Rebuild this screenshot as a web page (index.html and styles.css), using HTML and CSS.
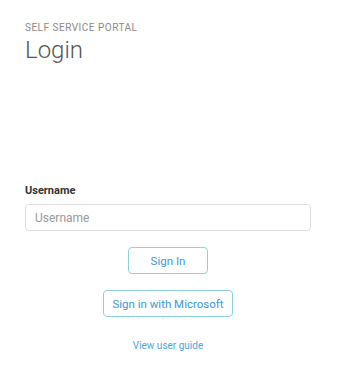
FILE: index.html
```html
<!DOCTYPE html>
<html lang="en">

<head>
  <meta charset="UTF-8" />
  <meta name="viewport" content="width=device-width, initial-scale=1.0" />
  <title>Login</title>
  <link rel="stylesheet" href="styles.css">
</head>

<body>
  <div class="page">
    <header class="header">
      <div class="eyebrow">SELF SERVICE PORTAL</div>
      <h1 class="title">Login</h1>
    </header>

    <form class="form">
      <label class="label" for="username">Username</label>
      <input class="input" id="username" placeholder="Username" autocomplete="off" />
      <div class="actions">
        <button type="submit" class="btn">Sign In</button>
        <button type="button" class="btn">Sign in with Microsoft</button>
        <a class="guide" href="#">View user guide</a>
      </div>
    </form>
  </div>
</body>

</html>
```

FILE: styles.css
```css
body {
  margin: 0;
  background: #fff;
  font-family: Roboto, "Liberation Sans", sans-serif;
  color: #333;
}

.page {
  padding: 21px 26px 0 25px;
}

.eyebrow {
  font-size: 10px;
  letter-spacing: 0.5px;
  color: #888;
  line-height: 14px;
}

.title {
  margin: 0;
  font-size: 24px;
  font-weight: 300;
  color: #555;
  line-height: 30px;
}

.form {
  display: flex;
  flex-direction: column;
  margin-top: 119px;
}

.label {
  font-size: 11px;
  font-weight: bold;
  color: #333;
  line-height: 14px;
  margin-bottom: 6px;
}

.input {
  height: 27px;
  box-sizing: border-box;
  padding: 0 9px;
  border: 1px solid #ddd;
  border-radius: 4px;
  font-family: inherit;
  font-size: 12px;
  color: #333;
  outline: none;
}

.input::placeholder {
  color: #999;
}

.actions {
  display: flex;
  flex-direction: column;
  align-items: center;
  gap: 16px;
  margin-top: 16px;
}

.btn {
  min-width: 80px;
  height: 27px;
  padding: 0 8px;
  border: 1px solid #8ccfe3;
  border-radius: 4px;
  background: #fff;
  color: #3a9ad0;
  font-family: inherit;
  font-size: 11.5px;
  cursor: pointer;
}

.guide {
  margin-top: 7px;
  font-size: 10px;
  color: #4aa6de;
  text-decoration: none;
}
```
